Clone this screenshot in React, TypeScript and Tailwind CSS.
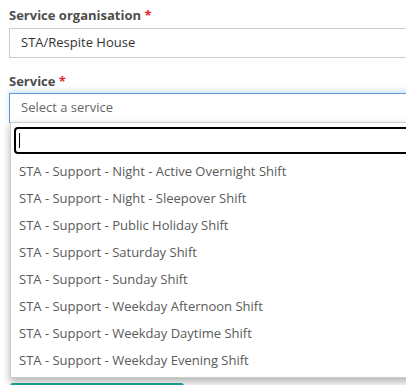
const services = [
  'STA - Support - Night - Active Overnight Shift',
  'STA - Support - Night - Sleepover Shift',
  'STA - Support - Public Holiday Shift',
  'STA - Support - Saturday Shift',
  'STA - Support - Sunday Shift',
  'STA - Support - Weekday Afternoon Shift',
  'STA - Support - Weekday Daytime Shift',
  'STA - Support - Weekday Evening Shift',
];

export default function App() {
  return (
    <div className="w-[406px] h-[385px] overflow-hidden bg-white font-['Open_Sans',sans-serif] text-[13px]">
      <div className="w-[460px] pl-[9px] pt-[6px]">
        <label className="block leading-[18px] font-bold text-[#4d4d4d]">
          Service organisation <span className="text-[#e3262f]">*</span>
        </label>
        <div className="mt-[4px] h-[30px] border border-[#cccccc] px-[11px] flex items-center text-[#333]">
          STA/Respite House
        </div>

        <label className="block mt-[14px] leading-[18px] font-bold text-[#4d4d4d]">
          Service <span className="text-[#e3262f]">*</span>
        </label>
        <div className="relative mt-[3px]">
          <div className="h-[30px] border border-[#5a9ad8] shadow-[0_-3px_6px_rgba(90,154,216,0.25)] px-[11px] flex items-center text-[#666]">
            Select a service
          </div>

          <div className="absolute left-[1px] right-0 top-[29px] z-10 bg-white border border-[#cccccc] shadow-[0_4px_8px_rgba(0,0,0,0.3)] pb-[3px]">
            <div className="pt-[4px] px-[3px] pb-[4px]">
              <div className="h-[27px] border-2 border-black rounded-[4px] flex items-center pl-[3px]">
                <span className="w-px h-[15px] bg-black" />
              </div>
            </div>
            <ul>
              {services.map((s) => (
                <li key={s} className="h-[27px] leading-[27px] pl-[8px] text-[#5a5a5a]">
                  {s}
                </li>
              ))}
            </ul>
          </div>

          <div className="mt-[260px] flex">
            <button className="w-[174px] h-[34px] ml-[1px] bg-[#1fa9a3] rounded-[3px]" />
          </div>
        </div>
      </div>
    </div>
  );
}
